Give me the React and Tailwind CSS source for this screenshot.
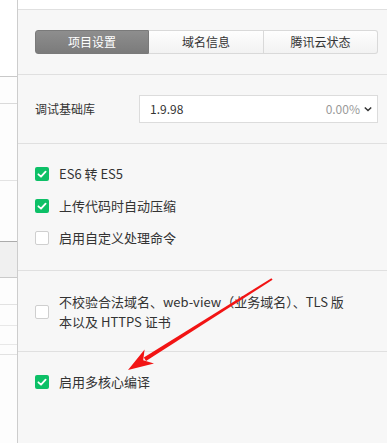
import React from "react";

const font = { fontFamily: '"Noto Sans CJK SC", "Noto Sans", sans-serif' };

function Check({ checked }) {
  if (checked) {
    return (
      <span className="flex h-[14px] w-[14px] shrink-0 items-center justify-center rounded-[2px] bg-[#0dc067]">
        <svg width="14" height="14" viewBox="0 0 14 14">
          <polyline points="3.4,7.3 6,9.7 10.6,4.6" fill="none" stroke="#fff" strokeWidth="1.8" strokeLinecap="round" strokeLinejoin="round" />
        </svg>
      </span>
    );
  }
  return <span className="h-[14px] w-[14px] shrink-0 rounded-[2px] border border-[#cfcfcf] bg-white" />;
}

function Row({ checked, children }) {
  return (
    <div className="flex h-[32px] items-center gap-[10px]">
      <Check checked={checked} />
      <span className="text-[13px] text-[#333]">{children}</span>
    </div>
  );
}

export default function App() {
  return (
    <div className="relative flex h-[443px] w-[387px] overflow-hidden bg-white" style={font}>
      {/* left strip */}
      <div className="flex w-[18px] shrink-0 flex-col border-r border-[#cdcdcd] bg-[#fdfdfd]">
        <div className="h-[77px] border-b border-[#c9c9c9] bg-white" />
        <div className="h-[27px] border-b border-[#dadada]" />
        <div className="h-[77px] border-b border-[#e3e3e3]" />
        <div className="h-[61px] border-b border-[#ababab]" />
        <div className="h-[36px] border-b border-[#cacaca] bg-[#f0f0f0]" />
        <div className="h-[27px] border-b border-[#e2e2e2]" />
        <div className="h-[21px] border-b border-[#e8e8e8]" />
        <div className="h-[19px] border-b border-[#e8e8e8]" />
        <div className="h-[10px] border-b border-[#e2e2e2]" />
        <div className="flex-1" />
      </div>

      {/* main panel */}
      <div className="flex flex-1 flex-col">
        <div className="h-[9px] bg-white" />
        <div className="flex flex-1 flex-col border-t border-[#e0e0e0] bg-[#f7f7f7]">
          {/* tabs */}
          <div className="border-b border-[#e0e0e0] pl-[17px] pr-[9px] pt-[20px] pb-[20px]">
            <div className="flex h-[24px] text-[12px]">
              <div className="flex w-[114px] items-center justify-center rounded-l-[3px] border border-[#7a7a7a] bg-gradient-to-b from-[#8e8e8e] to-[#7b7b7b] text-white">
                项目设置
              </div>
              <div className="flex w-[115px] items-center justify-center border-y border-r border-[#d9d9d9] bg-gradient-to-b from-[#fefefe] to-[#f2f2f2] text-[#333]">
                域名信息
              </div>
              <div className="flex flex-1 items-center justify-center rounded-r-[3px] border-y border-r border-[#d9d9d9] bg-gradient-to-b from-[#fefefe] to-[#f2f2f2] text-[#333]">
                腾讯云状态
              </div>
            </div>
          </div>

          {/* base lib */}
          <div className="flex items-center border-b border-[#e0e0e0] pl-[17px] pr-[9px] pt-[20px] pb-[20px]">
            <span className="w-[104px] text-[12px] text-[#333]">调试基础库</span>
            <div className="flex h-[28px] flex-1 items-center border border-[#dcdcdc] bg-white pl-[10px] pr-[4px] text-[12px]">
              <span className="flex-1 text-[#333]">1.9.98</span>
              <span className="text-[#9a9a9a]">0.00%</span>
              <svg width="10" height="8" viewBox="0 0 10 8" className="ml-[3px]">
                <polyline points="1.8,2.5 5,5.5 8.2,2.5" fill="none" stroke="#333" strokeWidth="1.5" />
              </svg>
            </div>
          </div>

          {/* options */}
          <div className="border-b border-[#e0e0e0] pl-[17px] pt-[14px] pb-[16px]">
            <Row checked>ES6 转 ES5</Row>
            <Row checked>上传代码时自动压缩</Row>
            <Row checked={false}>启用自定义处理命令</Row>
          </div>

          <div className="flex items-center gap-[10px] border-b border-[#e0e0e0] pl-[17px] pt-[21px] pb-[19px]">
            <Check checked={false} />
            <span className="text-[13px] leading-[20px] text-[#333]">
              不校验合法域名、web-view（业务域名）、TLS 版
              <br />
              本以及 HTTPS 证书
            </span>
          </div>

          <div className="pl-[17px] pt-[14px]">
            <Row checked>启用多核心编译</Row>
          </div>
        </div>
      </div>

      {/* red arrow annotation */}
      <svg className="pointer-events-none absolute left-0 top-0" width="387" height="443" viewBox="0 0 387 443">
        <polygon points="272.6,279.8 271.4,278.2 143.8,357.6 146.0,361.0" fill="#f21414" />
        <polygon points="128,370 144.6,349.4 143.2,360.2 154,363.6" fill="#f21414" />
      </svg>
    </div>
  );
}
